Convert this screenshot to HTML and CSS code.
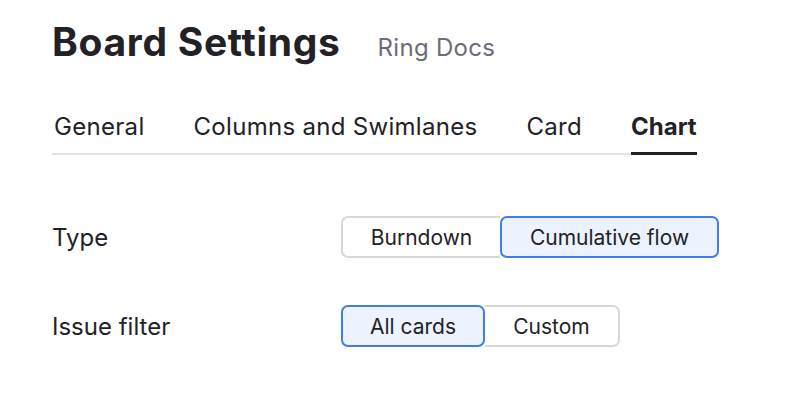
FILE: index.html
```html
<!DOCTYPE html>
<html>
<head>
<meta charset="utf-8">
<link rel="stylesheet" href="styles.css">
</head>
<body>
<div class="page">
  <header class="header">
    <h1 class="title">Board Settings</h1>
    <span class="subtitle">Ring Docs</span>
  </header>
  <nav class="tabs">
    <span class="tab">General</span>
    <span class="tab">Columns and Swimlanes</span>
    <span class="tab">Card</span>
    <span class="tab tab-active">Chart</span>
  </nav>
  <div class="rows">
    <div class="row">
      <div class="label">Type</div>
      <div class="segmented">
        <button class="seg seg-first seg-w1">Burndown</button>
        <button class="seg seg-last seg-on seg-w2">Cumulative flow</button>
      </div>
    </div>
    <div class="row">
      <div class="label">Issue filter</div>
      <div class="segmented">
        <button class="seg seg-first seg-on seg-w3">All cards</button>
        <button class="seg seg-last seg-w4">Custom</button>
      </div>
    </div>
  </div>
</div>
</body>
</html>
```
FILE: styles.css
```css
html, body {
  margin: 0;
  padding: 0;
  background: #ffffff;
}
body {
  font-family: Inter, "Noto Sans", sans-serif;
  color: #222226;
}
.page {
  padding: 20px 0 0 52px;
}
.header {
  display: flex;
  align-items: baseline;
  gap: 37px;
}
.title {
  margin: 0;
  font-size: 39px;
  font-weight: 700;
  line-height: 44px;
  letter-spacing: 0.7px;
  color: #222226;
}
.subtitle {
  font-size: 24px;
  letter-spacing: 0.3px;
  color: #6c6c78;
}
.tabs {
  display: inline-flex;
  gap: 49px;
  margin-top: 51px;
  border-bottom: 2px solid #e4e4e8;
  padding-left: 2px;
}
.tab {
  font-size: 24px;
  line-height: 24px;
  letter-spacing: 0.3px;
  padding-bottom: 13px;
  margin-bottom: -2px;
  color: #222226;
  border-bottom: 3px solid transparent;
}
.tab-active {
  font-weight: 700;
  letter-spacing: 0;
  border-bottom-color: #222226;
}
.rows {
  margin-top: 61px;
  display: flex;
  flex-direction: column;
  gap: 47px;
}
.row {
  display: flex;
  align-items: center;
}
.label {
  width: 289px;
  font-size: 24px;
  color: #222226;
}
.segmented {
  display: flex;
}
.seg {
  font-family: inherit;
  font-size: 21px;
  color: #222226;
  height: 42px;
  padding: 0;
  background: #ffffff;
  border: 2px solid #d8d8dc;
  cursor: pointer;
}
.seg-first {
  border-radius: 7px 0 0 7px;
  border-right: none;
}
.seg-last {
  border-radius: 0 7px 7px 0;
  border-left: none;
}
.seg-on {
  background: #edf3fe;
  border: 2px solid #3f7ee8;
  border-radius: 7px;
}
.seg-w1 { width: 159px; }
.seg-w2 { width: 219px; }
.seg-w3 { width: 144px; }
.seg-w4 { width: 135px; }
```
